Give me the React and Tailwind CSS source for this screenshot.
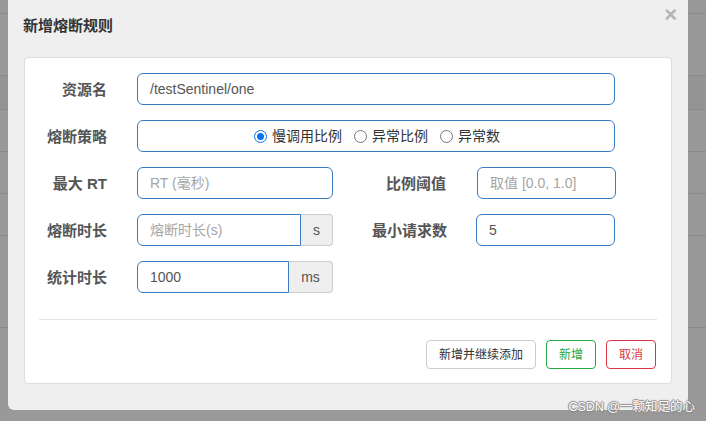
import React from "react";

const font = "font-['Liberation_Sans','Noto_Sans_CJK_SC',sans-serif]";

function Label({ children, className = "" }) {
  return (
    <div className={`text-right text-[15px] font-bold text-[#555] pt-[2px] ${className}`}>
      {children}
    </div>
  );
}

function Field({ value, placeholder, className = "" }) {
  return (
    <div
      className={`h-[32px] flex items-center px-[12px] border border-[#3a7cc2] rounded-[6px] bg-white text-[14px] ${className}`}
    >
      {value ? (
        <span className="text-[#555]">{value}</span>
      ) : (
        <span className="text-[#a5a5a5]">{placeholder}</span>
      )}
    </div>
  );
}

function AddonField({ value, placeholder, addon, inputW, addonW }) {
  return (
    <div className="flex h-[32px] text-[14px]">
      <div
        className={`flex items-center px-[12px] border border-[#3a7cc2] rounded-l-[6px] bg-white ${inputW}`}
      >
        {value ? (
          <span className="text-[#555]">{value}</span>
        ) : (
          <span className="text-[#a5a5a5]">{placeholder}</span>
        )}
      </div>
      <div
        className={`flex items-center justify-center border border-l-0 border-[#ccc] rounded-r-[4px] bg-[#eee] text-[#555] ${addonW}`}
      >
        {addon}
      </div>
    </div>
  );
}

function Radio({ checked, label }) {
  return (
    <div className="flex items-center gap-[5px]">
      {checked ? (
        <span className="w-[13px] h-[13px] rounded-full border border-[#0b70f0] p-[2px] flex">
          <span className="flex-1 rounded-full bg-[#0b70f0]" />
        </span>
      ) : (
        <span className="w-[13px] h-[13px] rounded-full border border-[#767676] bg-white" />
      )}
      <span className="text-[14px] text-[#333]">{label}</span>
    </div>
  );
}

export default function App() {
  return (
    <div className={`relative w-[706px] h-[421px] overflow-hidden bg-[#999] ${font}`}>
      {/* table rows behind the backdrop */}
      <div className="flex flex-col">
        <div className="h-[14px] border-b border-[#8b8b8b]" />
        <div className="h-[62px] border-b border-[#8b8b8b]" />
        <div className="h-[34px] border-b border-[#8b8b8b] bg-[#949494]" />
        <div className="h-[42px] border-b border-[#8b8b8b]" />
        <div className="h-[42px] border-b border-[#8b8b8b]" />
        <div className="h-[42px] border-b border-[#8b8b8b]" />
        <div className="h-[92px] border-b border-[#8b8b8b]" />
      </div>

      {/* modal */}
      <div className="absolute left-[8px] top-[-4px] w-[680px] h-[414px] rounded-[6px] bg-[#efefef] flex flex-col">
        <div className="h-[61px] px-[15px] flex items-center text-[15px] font-bold text-[#333]">
          新增熔断规则
        </div>
        <span className="absolute right-[11px] top-[8px] text-[22px] leading-none font-bold text-[#b4b4b4]">
          ×
        </span>

        <div className="mx-[16px] h-[327px] rounded-[4px] border border-[#ddd] bg-white flex flex-col pt-[15px]">
          <div className="flex flex-col gap-[15px]">
            <div className="flex items-center">
              <Label className="w-[82px]">资源名</Label>
              <Field value="/testSentinel/one" className="ml-[30px] w-[478px]" />
            </div>

            <div className="flex items-center">
              <Label className="w-[82px]">熔断策略</Label>
              <div className="ml-[30px] w-[478px] h-[32px] border border-[#3a7cc2] rounded-[6px] flex items-center justify-center gap-[12px] pl-[2px]">
                <Radio checked label="慢调用比例" />
                <Radio label="异常比例" />
                <Radio label="异常数" />
              </div>
            </div>

            <div className="flex items-center">
              <Label className="w-[82px]">最大 RT</Label>
              <Field placeholder="RT (毫秒)" className="ml-[30px] w-[196px]" />
              <Label className="w-[113px]">比例阈值</Label>
              <Field placeholder="取值 [0.0, 1.0]" className="ml-[31px] w-[139px]" />
            </div>

            <div className="flex items-center">
              <Label className="w-[82px]">熔断时长</Label>
              <div className="ml-[30px]">
                <AddonField placeholder="熔断时长(s)" addon="s" inputW="w-[164px]" addonW="w-[32px]" />
              </div>
              <Label className="w-[114px]">最小请求数</Label>
              <Field value="5" className="ml-[29px] w-[139px]" />
            </div>

            <div className="flex items-center">
              <Label className="w-[82px]">统计时长</Label>
              <div className="ml-[30px]">
                <AddonField value="1000" addon="ms" inputW="w-[152px]" addonW="w-[44px]" />
              </div>
            </div>
          </div>

          <div className="mx-[14px] mt-[26px] border-t border-[#e5e5e5]" />

          <div className="flex justify-end gap-[10px] pr-[15px] mt-[20px] text-[12px]">
            <button className="h-[29px] px-[12px] rounded-[4px] border border-[#ccc] bg-white text-[#333]">
              新增并继续添加
            </button>
            <button className="h-[29px] px-[12px] rounded-[4px] border border-[#28a745] bg-white text-[#28a745]">
              新增
            </button>
            <button className="h-[29px] px-[12px] rounded-[4px] border border-[#dc3545] bg-white text-[#dc3545]">
              取消
            </button>
          </div>
        </div>
      </div>

      {/* watermark */}
      <div className="absolute right-[11px] bottom-[4px] text-[12.5px] text-white [text-shadow:1px_0_1px_#888,-1px_0_1px_#888,0_1px_1px_#888,0_-1px_1px_#888]">
        CSDN @一颗知足的心
      </div>
    </div>
  );
}
